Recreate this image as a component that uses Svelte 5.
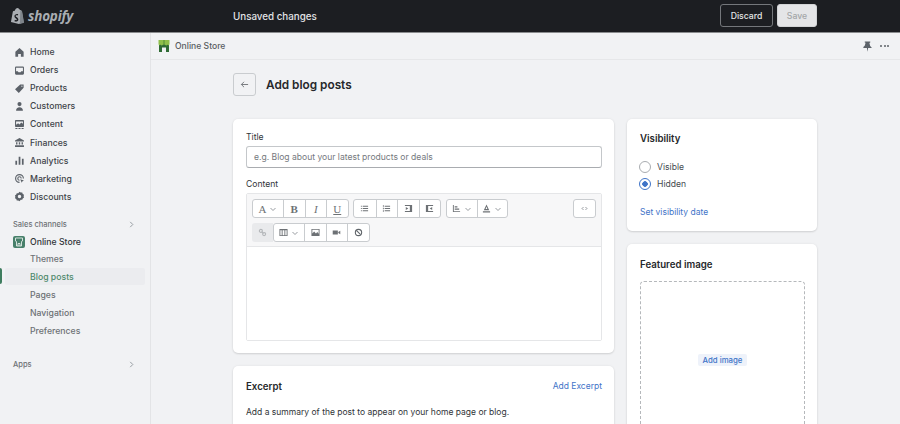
<script>
  const mainNav = [
    { label: "Home", icon: "M8 1.500 2 7v7h4v-4h4v4h4V7z" },
    { label: "Orders", icon: "M3 2h10a1.500 1.500 0 0 1 1.500 1.500v9A1.500 1.500 0 0 1 13 14H3a1.500 1.500 0 0 1-1.500-1.500v-9A1.500 1.500 0 0 1 3 2zm0 2v5h2.500l1 1.500h3l1-1.500H13V4z" },
    { label: "Products", icon: "M9 2h5v5l-7 7.500L1.500 9zm2.500 1.800a.9.9 0 1 0 0 1.800.9.9 0 0 0 0-1.800z" },
    { label: "Customers", icon: "M8 1.500a3 3 0 1 1 0 6 3 3 0 0 1 0-6zM3 14c0-3 2-4.800 5-4.800s5 1.800 5 4.800z" },
    { label: "Content", icon: "M2.500 1.500h11a1 1 0 0 1 1 1v8a1 1 0 0 1-1 1h-11a1 1 0 0 1-1-1v-8a1 1 0 0 1 1-1zm.5 2v5l3-2.500 2 2 2.500-3L13 7V3.500zM2 13h3v1.500H2zm4.500 0h3v1.500h-3zm4.500 0h3v1.500h-3z" },
    { label: "Finances", icon: "M8 1.500 14.500 5v1.500h-13V5zM3 7.500h2V11H3zm4 0h2V11H7zm4 0h2V11h-2zM1.500 12h13v2.500h-13z" },
    { label: "Analytics", icon: "M2 8.500h2.500V14H2zM6.800 2.500h2.500V14H6.800zM11.500 5.500H14V14h-2.500z" },
    { label: "Marketing", icon: "M8 1.500a6.500 6.500 0 0 1 6.500 6.500h-1.700A4.800 4.800 0 1 0 8 12.800v1.700A6.500 6.500 0 0 1 8 1.500zm0 3.200A3.300 3.300 0 0 1 11.300 8H9.700A1.700 1.700 0 1 0 8 9.700v1.600a3.300 3.300 0 0 1 0-6.600zM9 9l5.500 2-2.200 1 -1 2.200z" },
    { label: "Discounts", icon: "M8 1l1.800 1.300 2.200-.2.700 2.100 1.900 1.200-.6 2.100.6 2.100-1.900 1.200-.7 2.100-2.200-.2L8 15l-1.800-1.300-2.200.2-.7-2.100-1.900-1.200.6-2.100-.6-2.100 1.900-1.200.7-2.100 2.200.2zm0 4.500a2.500 2.500 0 1 0 0 5 2.500 2.500 0 0 0 0-5z" }
  ];
  const subNav = ["Themes", "Blog posts", "Pages", "Navigation", "Preferences"];
</script>

<div class="page">
  <header class="topbar">
    <div class="brand">
      <svg class="bag" viewBox="0 0 16 18" aria-hidden="true">
        <path fill="#a9adb2" d="M1 15.500 3 4.500c.2-.6 1.300-.8 2-1C5.600 1.800 6.800.5 8 .5c.8 0 1.300.5 1.600 1 .4 0 .8.300 1 1l1 .3 1 .9 2 12-5 1.800z" />
        <path fill="#7f858b" d="M11 3.200l1.200.3 .8.900 2 11.800-4.500 1.300z" />
        <path fill="#1c1e22" d="M8.700 7 8.300 8.400c-1-.5-2.300-.3-2.300.6 0 1.100 2.900 1.500 2.900 3.700 0 2-2.400 2.800-4.100 1.800l.4-1.500c1 .7 2.100.6 2.100-.2 0-1.200-2.600-1.400-2.600-3.600C4.700 7.300 7 6.200 8.700 7z" />
      </svg>
      <span class="wordmark">shopify</span>
    </div>
    <div class="topbar-main">
      <span class="unsaved">Unsaved changes</span>
      <div class="top-actions">
        <button class="discard">Discard</button>
        <button class="save">Save</button>
      </div>
    </div>
  </header>

  <div class="body">
    <aside class="sidebar">
      <nav class="main-nav">
        {#each mainNav as item}
          <div class="nav-row">
            <svg class="nav-icon" viewBox="0 0 16 16" aria-hidden="true"><path fill-rule="evenodd" d={item.icon} /></svg>
            <span>{item.label}</span>
          </div>
        {/each}
      </nav>

      <div class="section-head channels">
        <span>Sales channels</span>
        <svg class="chev" viewBox="0 0 8 8" aria-hidden="true"><path d="M2.500 1 5.500 4l-3 3" /></svg>
      </div>
      <div class="store-row">
        <span class="store-badge">
          <svg viewBox="0 0 12 12" aria-hidden="true"><path d="M2.500 2h7v3a1 1 0 0 1-1 .6V10H3.500V5.600a1 1 0 0 1-1-.6zM5 10V7.500h2V10" /></svg>
        </span>
        <span>Online Store</span>
      </div>
      {#each subNav as sub}
        <div class="sub-row" class:active={sub === "Blog posts"}>{sub}</div>
      {/each}

      <div class="section-head apps">
        <span>Apps</span>
        <svg class="chev" viewBox="0 0 8 8" aria-hidden="true"><path d="M2.500 1 5.500 4l-3 3" /></svg>
      </div>
    </aside>

    <div class="content">
      <div class="subheader">
        <div class="sub-title">
          <svg class="store-logo" viewBox="0 0 12 12" aria-hidden="true">
            <path fill="#2f6b34" d="M1 4h10v8H8V7.500H4V12H1z" />
            <path fill="#8fbf4a" d="M.5 0h4.500v4a1.100 1.100 0 0 1-2.200.5A1.200 1.200 0 0 1 .5 4zM7 0h4.500v4a1.200 1.200 0 0 1-2.300.5A1.100 1.100 0 0 1 7 4z" />
            <path fill="#6fa53f" d="M5 0h2v4a1 1 0 0 1-2 0z" />
          </svg>
          <span>Online Store</span>
        </div>
        <div class="sub-actions">
          <svg class="pin" viewBox="0 0 12 12" aria-hidden="true"><path d="M3 .5h6v1l-.9.8.8 3.200 1.600 1.500V7.500H6.700L6 11.800l-.7-4.300H1.500V6.500l1.600-1.500.8-3.200L3 1.500z" /></svg>
          <span class="dots"><i></i><i></i><i></i></span>
        </div>
      </div>

      <main class="main">
        <div class="page-head">
          <button class="back" aria-label="Back">
            <svg viewBox="0 0 10 10" aria-hidden="true"><path d="M9 5H1.500M4.500 2 1.500 5l3 3" /></svg>
          </button>
          <h1>Add blog posts</h1>
        </div>

        <div class="columns">
          <div class="col-left">
            <section class="card form-card">
              <label class="field-label" for="title">Title</label>
              <input id="title" class="title-input" placeholder="e.g. Blog about your latest products or deals" />
              <div class="field-label content-label">Content</div>
              <div class="editor">
                <div class="toolbar">
                  <div class="tool-line">
                    <div class="tool-group">
                      <span class="tool wide serif">A<svg class="caret" viewBox="0 0 8 8"><path d="M1.500 3 4 5.500 6.500 3" /></svg></span>
                      <span class="tool serif bold">B</span>
                      <span class="tool serif ital">I</span>
                      <span class="tool serif under">U</span>
                    </div>
                    <div class="tool-group">
                      <span class="tool"><svg class="glyph" viewBox="0 0 10 10"><path d="M3 2h6v1H3zM3 4.500h6v1H3zM3 7h6v1H3zM1 2h1v1H1zM1 4.500h1v1H1zM1 7h1v1H1z" /></svg></span>
                      <span class="tool"><svg class="glyph" viewBox="0 0 10 10"><path d="M3 2h6v1H3zM3 4.500h6v1H3zM3 7h6v1H3zM1 1.500h1v1.500H1zM1 4.200h1v1.500H1zM1 7h1v1.500H1z" /></svg></span>
                      <span class="tool"><svg class="glyph" viewBox="0 0 10 10"><path d="M1 1h8v1.200H1zM6.500 2.200H9v5.600H6.500zM1 7.800h8V9H1zM2 3.200 4.800 5 2 6.800z" /></svg></span>
                      <span class="tool"><svg class="glyph" viewBox="0 0 10 10"><path d="M1 1h8v1.200H1zM1 2.200h2.500v5.600H1zM1 7.800h8V9H1zM8 3.200 5.200 5 8 6.800z" /></svg></span>
                    </div>
                    <div class="tool-group">
                      <span class="tool wide"><svg class="glyph" viewBox="0 0 10 10"><path d="M1 1h1v8H1zM3 2.500h3v1.500H3zM3 5h5v1.500H3zM1 8h8v1H1z" /></svg><svg class="caret" viewBox="0 0 8 8"><path d="M1.500 3 4 5.500 6.500 3" /></svg></span>
                      <span class="tool wide"><svg class="glyph" viewBox="0 0 10 10"><path fill-rule="evenodd" d="M5 .5 8 7H2zm0 2.500L4 5.500h2zM1 8h8v1.500H1z" /></svg><svg class="caret" viewBox="0 0 8 8"><path d="M1.500 3 4 5.500 6.500 3" /></svg></span>
                    </div>
                    <div class="tool-group code-group">
                      <span class="tool code"><svg class="stroke-glyph small" viewBox="0 0 10 10"><path d="M3.500 3 1.500 5l2 2M6.500 3l2 2-2 2" /></svg></span>
                    </div>
                  </div>
                  <div class="tool-line">
                    <span class="tool link-disabled"><svg class="stroke-glyph light" viewBox="0 0 10 10"><circle cx="3.200" cy="3.200" r="1.700" /><circle cx="6.800" cy="6.800" r="1.700" /><path d="M4 4l2 2" /></svg></span>
                    <div class="tool-group">
                      <span class="tool wide"><svg class="glyph" viewBox="0 0 10 10"><path fill-rule="evenodd" d="M.5 1h9v8h-9zm1 1.500V8h1.500V2.500zm2.500 0V8h2V2.500zm3 0V8h1.500V2.500z" /></svg><svg class="caret" viewBox="0 0 8 8"><path d="M1.500 3 4 5.500 6.500 3" /></svg></span>
                      <span class="tool"><svg class="glyph" viewBox="0 0 10 10"><path fill-rule="evenodd" d="M.5 1h9v8h-9zm1 1v4l2-2 2 2 1.500-1.500L8.500 6.500V2z" /></svg></span>
                      <span class="tool"><svg class="glyph" viewBox="0 0 10 10"><path d="M.8 2.800h5.700v4.400H.8zM7 4.500 9.200 3v4L7 5.500z" /></svg></span>
                      <span class="tool"><svg class="stroke-glyph" viewBox="0 0 10 10"><circle cx="5" cy="5" r="3.500" /><path d="M2.600 2.600l4.800 4.800" /></svg></span>
                    </div>
                  </div>
                </div>
                <div class="editor-area"></div>
              </div>
            </section>

            <section class="card excerpt-card">
              <div class="excerpt-head">
                <h2>Excerpt</h2>
                <span class="link">Add Excerpt</span>
              </div>
              <p>Add a summary of the post to appear on your home page or blog.</p>
            </section>
          </div>

          <div class="col-right">
            <section class="card visibility-card">
              <h2>Visibility</h2>
              <div class="radios">
                <div class="radio-row"><span class="radio"></span>Visible</div>
                <div class="radio-row"><span class="radio on"></span>Hidden</div>
              </div>
              <span class="link">Set visibility date</span>
            </section>

            <section class="card image-card">
              <h2>Featured image</h2>
              <div class="dropzone"><span class="add-image">Add image</span></div>
            </section>
          </div>
        </div>
      </main>
    </div>
  </div>
</div>

<style>
  :global(body) {
    margin: 0;
    background: #f1f2f4;
  }

  .page {
    height: 424px;
    overflow: hidden;
    display: flex;
    flex-direction: column;
    font-family: Inter, "Liberation Sans", sans-serif;
    font-size: 8.700px;
    color: #202223;
    background: #f1f2f4;
  }

  .topbar {
    height: 33px;
    flex: none;
    display: flex;
    background: #1c1e22;
    border-bottom: 1px solid #8a8c8e;
    box-sizing: border-box;
  }

  .brand {
    width: 233px;
    flex: none;
    display: flex;
    align-items: center;
    padding-left: 10px;
    gap: 3px;
    box-sizing: border-box;
  }

  .bag {
    width: 15px;
    height: 18px;
  }

  .wordmark {
    font-family: "Open Sans", sans-serif;
    font-style: italic;
    font-weight: 700;
    font-size: 13.500px;
    letter-spacing: -0.2px;
    color: #a9adb2;
    margin-top: -1px;
  }

  .topbar-main {
    width: 584px;
    display: flex;
    align-items: center;
    justify-content: space-between;
  }

  .unsaved {
    font-size: 9.800px;
    font-weight: 500;
    color: #e3e5e7;
  }

  .top-actions {
    display: flex;
    gap: 4px;
    margin-top: -1px;
  }

  .top-actions button {
    height: 23px;
    border-radius: 3px;
    font-family: inherit;
    font-size: 8.700px;
    font-weight: 500;
    padding: 0;
  }

  .discard {
    width: 53px;
    background: #1c1e22;
    color: #e3e5e7;
    border: 1px solid #74777b;
  }

  .save {
    width: 40px;
    background: #e4e5e7;
    color: #a3a5a8;
    border: 1px solid #d2d4d6;
  }

  .body {
    flex: 1;
    display: flex;
    min-height: 0;
  }

  .sidebar {
    width: 151px;
    flex: none;
    box-sizing: border-box;
    border-right: 1px solid #e3e4e6;
    padding-top: 10px;
    font-weight: 500;
    color: #42474c;
  }

  .nav-row {
    height: 18.100px;
    display: flex;
    align-items: center;
    gap: 5px;
    padding-left: 14px;
    color: #3f4449;
  }

  .nav-icon {
    width: 11px;
    height: 11px;
    fill: #5c6269;
  }

  .section-head {
    height: 14px;
    display: flex;
    align-items: center;
    justify-content: space-between;
    padding: 0 15px 0 13px;
    font-size: 7.500px;
    color: #6d7175;
  }

  .channels {
    margin-top: 12px;
  }

  .apps {
    margin-top: 17px;
  }

  .chev {
    width: 7px;
    height: 7px;
    fill: none;
    stroke: #8c9196;
    stroke-width: 1;
  }

  .store-row {
    height: 16px;
    margin-top: 2.500px;
    display: flex;
    align-items: center;
    gap: 5px;
    padding-left: 13px;
    color: #303438;
  }

  .store-badge {
    width: 12px;
    height: 12px;
    border-radius: 2px;
    background: #47806a;
    display: flex;
  }

  .store-badge svg {
    width: 12px;
    height: 12px;
    fill: none;
    stroke: #e3ece8;
    stroke-width: 0.9;
  }

  .sub-row {
    height: 18px;
    line-height: 18px;
    padding-left: 30px;
    color: #6d7175;
    position: relative;
  }

  .sub-row.active {
    color: #4f8a6d;
    background: #ebecef;
    margin: 0 5px 1px;
    padding-left: 25px;
    border-radius: 2px;
    height: 17px;
    line-height: 19px;
  }

  .sub-row.active::before {
    content: "";
    position: absolute;
    left: -5px;
    top: 0;
    width: 2px;
    height: 16px;
    background: #3f7d5f;
    border-radius: 0 2px 2px 0;
  }

  .content {
    flex: 1;
    min-width: 0;
  }

  .subheader {
    height: 27px;
    box-sizing: border-box;
    border-bottom: 1px solid #e6e7e9;
    display: flex;
    align-items: center;
    justify-content: space-between;
    padding: 0 11px 0 7px;
    color: #585d62;
  }

  .sub-title {
    display: flex;
    align-items: center;
    gap: 5px;
    font-size: 8.600px;
    font-weight: 500;
  }

  .store-logo {
    width: 12px;
    height: 12px;
  }

  .sub-actions {
    display: flex;
    align-items: center;
    gap: 7px;
  }

  .pin {
    width: 11px;
    height: 11px;
    fill: #5c6269;
  }

  .dots {
    display: flex;
    gap: 1.500px;
  }

  .dots i {
    width: 2px;
    height: 2px;
    border-radius: 50%;
    background: #5c6269;
  }

  .main {
    padding: 13px 0 0 82px;
  }

  .page-head {
    display: flex;
    align-items: center;
    gap: 10px;
    height: 23px;
  }

  .back {
    width: 23px;
    height: 23px;
    padding: 0;
    background: #f1f2f4;
    border: 1px solid #c9cccf;
    border-radius: 3px;
    display: flex;
    align-items: center;
    justify-content: center;
  }

  .back svg {
    width: 9px;
    height: 9px;
    fill: none;
    stroke: #6d7175;
    stroke-width: 1;
  }

  h1 {
    margin: 0;
    font-size: 11.800px;
    font-weight: 600;
    color: #26282b;
  }

  .columns {
    display: flex;
    gap: 13px;
    margin-top: 23px;
    align-items: flex-start;
  }

  .col-left {
    width: 381px;
    display: flex;
    flex-direction: column;
    gap: 13px;
  }

  .col-right {
    width: 190px;
    display: flex;
    flex-direction: column;
    gap: 13px;
  }

  .card {
    background: #fff;
    border-radius: 5px;
    box-shadow: 0 0 3px rgba(23, 24, 24, 0.06), 0 1px 2px rgba(0, 0, 0, 0.12);
    box-sizing: border-box;
  }

  .form-card {
    height: 234px;
    padding: 12px 12px 12px 13px;
  }

  .field-label {
    display: block;
    line-height: 12px;
    font-size: 8.600px;
    color: #303438;
    font-weight: 400;
  }

  .title-input {
    display: block;
    width: 100%;
    box-sizing: border-box;
    height: 22px;
    margin-top: 3px;
    padding: 0 7px;
    border: 1px solid #c4c7ca;
    border-bottom-color: #a9acb0;
    border-radius: 3px;
    font-family: inherit;
    font-size: 8.550px;
    outline: none;
  }

  .title-input::placeholder {
    color: #75797e;
    opacity: 1;
  }

  .content-label {
    margin-top: 10px;
  }

  .editor {
    margin-top: 3px;
    height: 148px;
    border: 1px solid #e5e6e8;
    border-radius: 2px;
    box-sizing: border-box;
    display: flex;
    flex-direction: column;
  }

  .toolbar {
    height: 53px;
    flex: none;
    box-sizing: border-box;
    background: #f7f7f8;
    border-bottom: 1px solid #e5e6e8;
    padding: 5px 5px 0;
    display: flex;
    flex-direction: column;
    gap: 5px;
  }

  .tool-line {
    display: flex;
    gap: 4.700px;
    height: 19px;
  }

  .tool-group {
    display: flex;
    background: #fff;
    border: 1px solid #c9cccf;
    border-radius: 3px;
    box-sizing: border-box;
    height: 19px;
  }

  .code-group {
    margin-left: auto;
  }

  .tool {
    width: 21.500px;
    height: 17px;
    display: flex;
    align-items: center;
    justify-content: center;
    gap: 3px;
    box-sizing: border-box;
    border-left: 1px solid #c9cccf;
    color: #6d7175;
    font-size: 10px;
  }

  .tool:first-child {
    border-left: none;
  }

  .tool.wide {
    width: 30px;
  }

  .code {
    width: 21px;
  }

  .serif {
    font-family: "Liberation Serif", serif;
    font-size: 11px;
  }

  .bold {
    font-weight: 700;
  }

  .ital {
    font-style: italic;
  }

  .under {
    text-decoration: underline;
  }

  .link-disabled {
    width: 21px;
    height: 19px;
    background: #e9eaec;
    border: none;
    border-radius: 3px 0 0 3px;
    margin-right: -4.700px;
  }

  .glyph {
    width: 9px;
    height: 9px;
    fill: #6d7175;
  }

  .stroke-glyph {
    width: 9px;
    height: 9px;
    fill: none;
    stroke: #5f6469;
    stroke-width: 1.200;
  }

  .stroke-glyph.small {
    width: 7px;
    height: 7px;
    stroke: #7b8085;
  }

  .stroke-glyph.light {
    stroke: #b4b7ba;
  }

  .caret {
    width: 8px;
    height: 8px;
    fill: none;
    stroke: #8c9196;
    stroke-width: 0.900;
  }

  .editor-area {
    flex: 1;
    background: #fff;
  }

  h2 {
    margin: 0;
    font-size: 9.700px;
    font-weight: 600;
    color: #26282b;
  }

  .excerpt-card {
    padding: 13px 12px 13px 13px;
    height: 90px;
  }

  .excerpt-head {
    display: flex;
    justify-content: space-between;
    align-items: center;
    height: 14px;
  }

  .excerpt-card p {
    margin: 14px 0 0;
    font-size: 8.500px;
    color: #303438;
  }

  .link {
    color: #3f74c8;
    font-size: 8.500px;
  }

  .visibility-card {
    height: 112px;
    padding: 13px 13px 12px;
  }

  .visibility-card h2 {
    line-height: 14px;
  }

  .radios {
    margin-top: 12px;
    display: flex;
    flex-direction: column;
  }

  .radio-row {
    display: flex;
    align-items: center;
    gap: 6px;
    height: 17.500px;
    font-size: 8.600px;
    color: #454a4f;
  }

  .radio {
    width: 12px;
    height: 12px;
    box-sizing: border-box;
    border: 1px solid #a9acb0;
    border-radius: 50%;
    background: #fff;
    margin-left: -1px;
  }

  .radio.on {
    border-color: #3f74c8;
    background: radial-gradient(circle, #3f74c8 0 2.500px, #fff 3px);
  }

  .visibility-card .link {
    display: block;
    margin-top: 14px;
  }

  .image-card {
    padding: 15px 12px 13px 13px;
    height: 260px;
  }

  .dropzone {
    margin-top: 11px;
    height: 158px;
    box-sizing: border-box;
    border: 1px dashed #b5b8bb;
    border-radius: 4px;
    display: flex;
    align-items: center;
    justify-content: center;
  }

  .add-image {
    font-size: 7.800px;
    font-weight: 500;
    line-height: 12px;
    color: #3f74c8;
    background: #eef2fa;
    padding: 0 5px;
    border-radius: 2px;
  }
</style>
